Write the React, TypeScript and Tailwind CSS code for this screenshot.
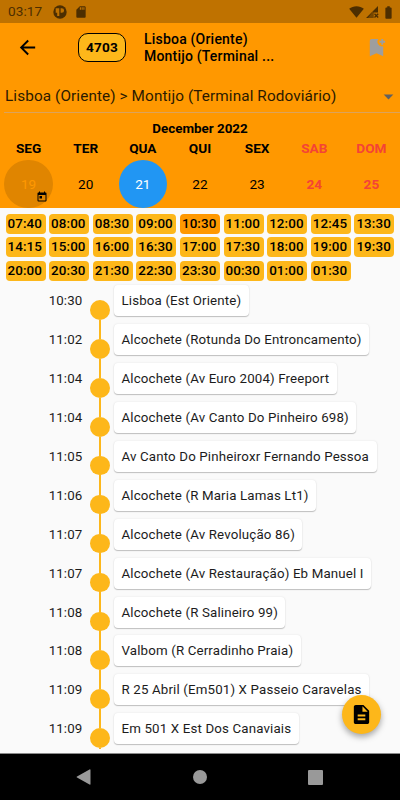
import clsx from 'clsx';
import {
  MdArrowBack,
  MdArrowDropDown,
  MdBatteryFull,
  MdBookmarkAdd,
  MdDescription,
  MdSdCard,
  MdToday,
} from 'react-icons/md';

interface Day {
  name: string;
  date: number;
  weekend?: boolean;
}

interface Stop {
  time: string;
  name: string;
}

const days: Day[] = [
  { name: 'SEG', date: 19 },
  { name: 'TER', date: 20 },
  { name: 'QUA', date: 21 },
  { name: 'QUI', date: 22 },
  { name: 'SEX', date: 23 },
  { name: 'SAB', date: 24, weekend: true },
  { name: 'DOM', date: 25, weekend: true },
];

const today = 19;
const selectedDay = 21;

const departures = [
  '07:40', '08:00', '08:30', '09:00', '10:30', '11:00', '12:00', '12:45', '13:30',
  '14:15', '15:00', '16:00', '16:30', '17:00', '17:30', '18:00', '19:00', '19:30',
  '20:00', '20:30', '21:30', '22:30', '23:30', '00:30', '01:00', '01:30',
];

const selectedDeparture = '10:30';

const stops: Stop[] = [
  { time: '10:30', name: 'Lisboa (Est Oriente)' },
  { time: '11:02', name: 'Alcochete (Rotunda Do Entroncamento)' },
  { time: '11:04', name: 'Alcochete (Av Euro 2004) Freeport' },
  { time: '11:04', name: 'Alcochete (Av Canto Do Pinheiro 698)' },
  { time: '11:05', name: 'Av Canto Do Pinheiroxr Fernando Pessoa' },
  { time: '11:06', name: 'Alcochete (R Maria Lamas Lt1)' },
  { time: '11:07', name: 'Alcochete (Av Revolução 86)' },
  { time: '11:07', name: 'Alcochete (Av Restauração) Eb Manuel I' },
  { time: '11:08', name: 'Alcochete (R Salineiro 99)' },
  { time: '11:08', name: 'Valbom (R Cerradinho Praia)' },
  { time: '11:09', name: 'R 25 Abril (Em501) X Passeio Caravelas' },
  { time: '11:09', name: 'Em 501 X Est Dos Canaviais' },
];

function StatusBar() {
  return (
    <div className="flex h-[23px] shrink-0 items-center bg-[#bf7200] pt-px pr-[4px] pl-2 text-[#4d2e00]">
      <span className="w-[45px] text-[13.6px] leading-none tracking-[0.1px]">03:17</span>
      <svg className="h-[14px] w-[14px]" viewBox="0 0 14 14">
        <circle cx="7" cy="7" r="6.7" fill="currentColor" />
        <path d="M2.7 3.2h3.6v7.8H4.2V7.8H2.7zM7.6 3.2h1.2a2.3 2.3 0 0 1 0 4.6H7.6z" fill="#bf7200" />
      </svg>
      <MdSdCard className="ml-[7px] h-[14px] w-[14px]" />
      <div className="ml-auto flex items-center">
        <svg className="h-[12px] w-[15px]" viewBox="0 0 15 12">
          <path d="M7.5 11.8L.2 2.7C2.2 1.1 4.7.2 7.5.2s5.3.9 7.3 2.5z" fill="currentColor" />
        </svg>
        <svg className="ml-[2px] h-[12px] w-[13px]" viewBox="0 0 13 12">
          <path d="M0 12L12 0v6.5H7.5V12z" fill="currentColor" />
          <path d="M7.2 4.8V12H2z" fill="#bf7200" opacity="0.35" />
          <path d="M8.5 7.7l3.7 3.8m0-3.8l-3.7 3.8" stroke="currentColor" strokeWidth="1.3" />
        </svg>
        <MdBatteryFull className="ml-[2px] h-[15px] w-[15px]" />
      </div>
    </div>
  );
}

function AppBar() {
  return (
    <div className="flex h-[49px] shrink-0 items-center text-black">
      <MdArrowBack className="ml-[16px] h-[23px] w-[23px]" />
      <div className="ml-[39px] flex h-[29px] w-[48px] items-center justify-center rounded-[10px] border border-black bg-[#fdb71a] text-[13.6px] font-bold tracking-[0.2px]">
        4703
      </div>
      <div className="ml-[18px] text-[14px] leading-[17px] font-medium tracking-[0.2px] whitespace-nowrap">
        <p>Lisboa (Oriente)</p>
        <p>Montijo (Terminal ...</p>
      </div>
      <MdBookmarkAdd className="mr-[12px] ml-auto h-[23px] w-[23px] text-[#9e9e9e]" />
    </div>
  );
}

function WeekCalendar() {
  return (
    <div className="mt-[8px] text-black">
      <p className="text-center text-[13.4px] leading-[16px] font-bold">December 2022</p>
      <div className="mt-[2px] grid grid-cols-7">
        {days.map((day) => (
          <div key={day.name} className={clsx('flex flex-col items-center', day.weekend && 'text-[#f44336]')}>
            <span className="text-[13.6px] leading-[18px] font-bold">{day.name}</span>
            <div
              className={clsx(
                'relative mt-[2.5px] flex h-[48.5px] w-[48.5px] items-center justify-center rounded-full text-[13.6px]',
                day.date === today && 'bg-[#e08500] text-[#ff9800]',
                day.date === selectedDay && 'bg-[#2196f3] text-white',
                day.weekend && 'font-bold',
              )}
            >
              {day.date}
              {day.date === today && <MdToday className="absolute right-[5px] bottom-[5px] h-[12px] w-[12px] text-black" />}
            </div>
          </div>
        ))}
      </div>
    </div>
  );
}

function Departures() {
  return (
    <div className="mt-[6px] grid grid-cols-9 gap-x-[3.5px] gap-y-[3.4px] px-[5.5px]">
      {departures.map((time) => (
        <div
          key={time}
          className={clsx(
            'h-[20px] rounded-[4px] pl-[2px] text-[13.4px] leading-[19.5px] font-medium tracking-[0.1px] text-black',
            time === selectedDeparture ? 'bg-[#ff9800]' : 'bg-[#fdb71a]',
          )}
        >
          {time}
        </div>
      ))}
    </div>
  );
}

function StopList() {
  return (
    <div className="mt-[4.6px] text-[13.3px] tracking-[0.15px] text-[#1c1c1c]">
      {stops.map((stop, index) => (
        <div key={index} className="flex h-[38.9px] items-start">
          <span className="w-[82.5px] text-right leading-[31px]">{stop.time}</span>
          {/* Timeline */}
          <div className="ml-[7.5px] flex w-[20px] flex-col items-center self-stretch">
            <div className={clsx('h-[15px] w-[2px]', index > 0 && 'bg-[#fdb71a]')} />
            <div className="h-[19.5px] w-[19.5px] shrink-0 rounded-full bg-[#fdb71a]" />
            <div className={clsx('w-[2px]', index < stops.length - 1 ? 'flex-1 bg-[#fdb71a]' : 'h-[0.5px] bg-[#fdb71a]')} />
          </div>
          <div className="ml-[4px] h-[31px] rounded-[4px] bg-white px-[7.5px] leading-[31px] whitespace-nowrap shadow-[0_1px_1px_rgba(0,0,0,0.22),0_0_2px_rgba(0,0,0,0.1)]">
            {stop.name}
          </div>
        </div>
      ))}
    </div>
  );
}

function NavigationBar() {
  return (
    <div className="flex h-[47px] shrink-0 items-center border-t border-[#8a8a8a] bg-black text-[#999]">
      <svg className="ml-[76px] h-[16px] w-[15px]" viewBox="0 0 15 16">
        <path d="M13.5.5v15L1 8.5Q0 8 1 7.5L13.5.4q1-.4 1 .6v14q0 1-1 .5z" fill="currentColor" />
      </svg>
      <div className="ml-[102px] h-[14px] w-[14px] rounded-full bg-[#999]" />
      <div className="ml-[101px] h-[15px] w-[15px] rounded-[1px] bg-[#999]" />
    </div>
  );
}

export default function App() {
  return (
    <div className="relative flex h-[800px] w-[400px] flex-col overflow-hidden bg-[#fafafa] font-['Roboto',sans-serif]">
      <StatusBar />
      <div className="h-[185px] shrink-0 overflow-hidden bg-[#ff9800]">
        <AppBar />
        <div className="ml-[4px] flex h-[41px] items-center border-b border-[#dca35c] pt-[9px] pl-px text-[15.3px] tracking-[0.11px] text-[#2b1a00]">
          <span className="whitespace-nowrap">Lisboa (Oriente) &gt; Montijo (Terminal Rodoviário)</span>
          <MdArrowDropDown className="ml-auto h-[23px] w-[23px] shrink-0 text-[#616161]" />
        </div>
        <WeekCalendar />
      </div>
      <div className="min-h-0 flex-1">
        <Departures />
        <StopList />
      </div>
      <NavigationBar />
      <button className="absolute top-[695px] left-[342px] flex h-[39px] w-[39px] items-center justify-center rounded-full bg-[#fdb71a] text-black shadow-[0_3px_6px_rgba(0,0,0,0.35)]">
        <MdDescription className="h-[23px] w-[23px]" />
      </button>
    </div>
  );
}
